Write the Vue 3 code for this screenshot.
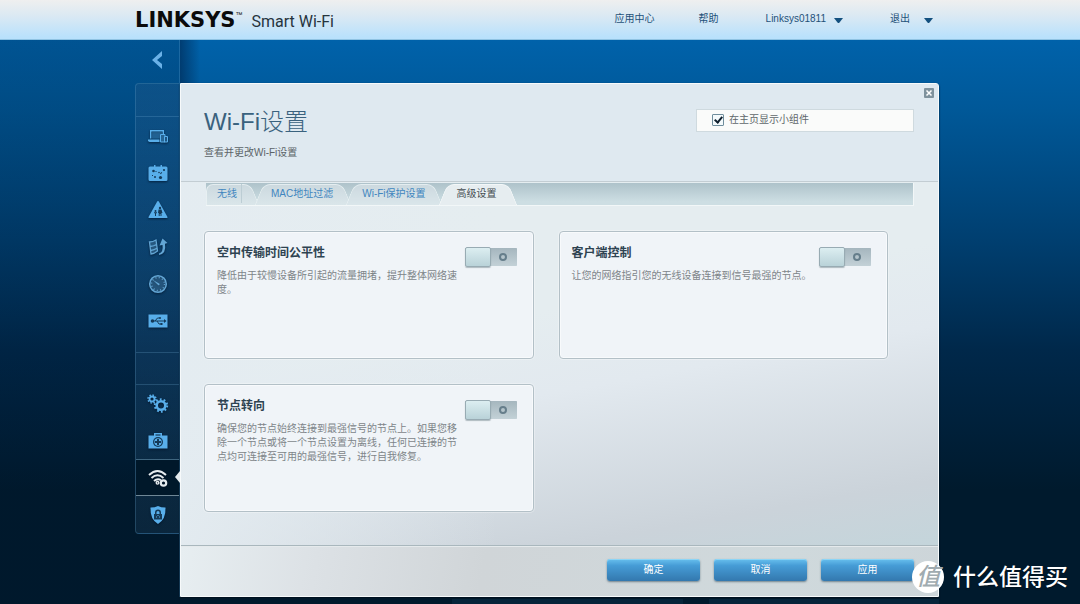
<script setup>
import { ref } from 'vue'

const tabs = ['无线', 'MAC地址过滤', 'Wi-Fi保护设置', '高级设置']
const activeTab = ref(3)
const showWidget = ref(true)

const cards = ref([
  {
    id: 'airtime',
    title: '空中传输时间公平性',
    text: '降低由于较慢设备所引起的流量拥堵，提升整体网络速度。',
    on: false
  },
  {
    id: 'client',
    title: '客户端控制',
    text: '让您的网络指引您的无线设备连接到信号最强的节点。',
    on: false
  },
  {
    id: 'node',
    title: '节点转向',
    text: '确保您的节点始终连接到最强信号的节点上。如果您移除一个节点或将一个节点设置为离线，任何已连接的节点均可连接至可用的最强信号，进行自我修复。',
    on: false
  }
])
</script>

<template>
  <div class="page">
    <header class="topbar">
      <a href="#" class="brand">
        <span class="brand-name">LINKSYS</span><span class="brand-tm">™</span>
        <span class="brand-sub">Smart Wi-Fi</span>
      </a>
      <nav class="topnav">
        <a href="#">应用中心</a>
        <a href="#">帮助</a>
        <button type="button">Linksys01811 <svg class="caret" viewBox="0 0 9 5"><path d="M0 0h9L5.500 4.500q-1 1-2 0z" /></svg></button>
        <button type="button">退出 <svg class="caret wide" viewBox="0 0 9 5"><path d="M0 0h9L5.500 4.500q-1 1-2 0z" /></svg></button>
      </nav>
    </header>

    <div class="workspace">
      <aside class="rail">
        <button type="button" class="back" aria-label="Back">
          <svg viewBox="0 0 12 18"><path d="M11 0v5L6 9l5 4v5L1 9z" /></svg>
        </button>
        <nav class="menu">
          <div class="blank"></div>
          <div class="group apps">
            <a href="#" aria-label="Devices">
              <svg viewBox="0 0 20 20">
                <path d="M2.700 12.500V4.700h12.600V8" fill="none" stroke="currentColor" stroke-width="1.400" />
                <path d="M4 6h10v2h-2v4.500H4z" opacity=".3" />
                <path d="M0 13.500h11.500V16H2q-1.500 0-2-1.500z" />
                <path d="M12.500 8.500h4.500v7.500h-4.500z" fill="currentColor" fill-opacity=".4" stroke="currentColor" />
                <path d="M16.500 10.500h3v5.500h-3z" fill="#1c5482" stroke="currentColor" />
              </svg>
            </a>
            <a href="#" aria-label="Guests">
              <svg viewBox="0 0 20 20">
                <path d="M2 3.500h4V2h1.500v1.500h5V2H14v1.500h4a1.500 1.500 0 0 1 1.500 1.500v11.500a1.500 1.500 0 0 1-1.500 1.500H2a1.500 1.500 0 0 1-1.500-1.500V5A1.500 1.500 0 0 1 2 3.500z" />
                <g class="ink"><circle cx="5.500" cy="8" r="1.300" /><circle cx="12.500" cy="14.500" r="1.600" /><circle cx="16" cy="7" r="1.100" /><circle cx="11" cy="9.500" r=".8" /><circle cx="7" cy="14" r="1" /><path d="M12 10.500l1.500-1.500.7.700-1.500 1.500zM4 12h1v1H4zM7.500 8h1v1h-1z" /></g>
              </svg>
            </a>
            <a href="#" aria-label="Parental controls">
              <svg viewBox="0 0 20 20">
                <path d="M10 1q.6 0 1 .7L19.500 17q.4 1-.7 1H1.200q-1.100 0-.7-1L9 1.700Q9.400 1 10 1z" />
                <g class="ink"><circle cx="12" cy="8" r="1.200" /><circle cx="7.500" cy="11" r="1" /><path d="M10.500 9.500h3l1 3.500h-1v3h-1v-2h-.8v2h-1v-3H10zM6 12.300h3v1H8V16H7v-2.700H6z" /></g>
              </svg>
            </a>
            <a href="#" aria-label="Prioritization">
              <svg class="soft" viewBox="0 0 20 20">
                <path d="M1.500 5q3.500 0 6.500-2l1.500 11q-3 2.500-6.500 3zM2.200 9.500Q6 9 8.800 7.200M2.800 13.500q3.500-.5 6.500-2.500" fill="currentColor" fill-opacity=".35" stroke="currentColor" stroke-width="1.300" />
                <path d="M11 16.500q4.500-1.500 3.500-8.500l-3 .5L14.500 1.500 19.500 6l-2.500.8q1.500 10-6 11.200z" />
              </svg>
            </a>
            <a href="#" aria-label="Speed test">
              <svg class="soft" viewBox="0 0 20 20">
                <circle cx="10" cy="10" r="8.300" fill="currentColor" fill-opacity=".3" stroke="currentColor" stroke-width="1.500" />
                <circle cx="10" cy="10" r="6.500" fill="none" stroke="currentColor" stroke-dasharray="1 2.400" stroke-width="1.500" />
                <path d="M5 6l6.500 3.700q.5 1.500-1.200 1.500z" />
              </svg>
            </a>
            <a href="#" aria-label="External storage">
              <svg viewBox="0 0 20 20">
                <path d="M.5 3.500h19v13H.5z" />
                <g class="ink"><path d="M3 9.500h13V8l2.500 2-2.500 2v-1.500H3z" /><circle cx="4.500" cy="10" r="1.800" /><path class="wire" d="M7 10l2.500-3h2M9 10l2 3h2" /><circle cx="12" cy="7" r="1" /><path d="M12.500 12h2v2h-2z" /></g>
              </svg>
            </a>
          </div>
          <div class="blank split"></div>
          <div class="group">
            <a href="#" aria-label="Connectivity">
              <svg class="gears" viewBox="0 0 22 20">
                <circle cx="5" cy="5" r="2.500" fill="none" stroke="currentColor" stroke-width="1.800" />
                <circle cx="5" cy="5" r="4" fill="none" stroke="currentColor" stroke-width="1.400" stroke-dasharray="1.570 1.570" />
                <circle cx="14" cy="11.500" r="4.300" fill="none" stroke="currentColor" stroke-width="2.600" />
                <circle cx="14" cy="11.500" r="6.200" fill="none" stroke="currentColor" stroke-width="2" stroke-dasharray="1.800 2.096" />
              </svg>
            </a>
            <a href="#" aria-label="Troubleshooting">
              <svg viewBox="0 0 20 20">
                <path d="M.5 4.500H6V2h8v2.500h5.500v13H.5zM7.500 3.500v1h5v-1z" />
                <circle class="ink" cx="10" cy="11" r="5" />
                <circle cx="10" cy="11" r="3.700" />
                <path class="ink" d="M9 8h2v2h2v2h-2v2H9v-2H7v-2h2z" />
              </svg>
            </a>
          </div>
          <a href="#" class="current" aria-label="Wi-Fi">
            <svg viewBox="0 0 20 20">
              <path d="M1 7q8.500-8 17 0M3.500 10q6-5.500 12 0M6 13q3.500-3.200 7-.8" fill="none" stroke="currentColor" stroke-width="1.900" />
              <circle cx="9.500" cy="14.800" r="1.300" fill="none" stroke="currentColor" stroke-width="1.400" />
              <circle cx="15.500" cy="15" r="2.700" fill="none" stroke="currentColor" stroke-width="2.200" />
            </svg>
            <span class="pointer"></span>
          </a>
          <a href="#" aria-label="Security">
            <svg viewBox="0 0 20 20">
              <path d="M10 1q3 1.500 7.500 1.500.5 12-7.500 16.500Q2 14.500 2.500 2.500 7 2.500 10 1z" />
              <path class="ink" d="M6 9h1V7.500q0-3 3-3t3 3V9h1v5.500H6zM8.500 9h3V7.500q0-1.500-1.500-1.500T8.500 7.500z" />
              <path d="M8 11.500h1v1H8zM11 11.500h1v1h-1zM9.500 10h1v1h-1z" />
            </svg>
          </a>
        </nav>
      </aside>

      <main class="panel">
        <div class="panel-head">
          <button type="button" class="close" aria-label="Close">
            <svg viewBox="0 0 10 10"><rect width="10" height="10" rx="1" /><path d="M2.500 2.500l5 5M7.500 2.500l-5 5" /></svg>
          </button>
          <div>
            <h1>Wi-Fi设置</h1>
            <p>查看并更改Wi-Fi设置</p>
          </div>
          <label class="widget" for="widget">
            <input id="widget" v-model="showWidget" type="checkbox">
            在主页显示小组件
          </label>
        </div>

        <div class="tabs" role="tablist">
          <button
            v-for="(tab, i) in tabs"
            :key="tab"
            type="button"
            role="tab"
            class="tab"
            :class="{ active: activeTab === i }"
            :aria-selected="activeTab === i"
            @click="activeTab = i"
          ><span>{{ tab }}</span></button>
        </div>

        <div class="cards">
          <section v-for="card in cards" :key="card.id" class="card">
            <div class="card-text">
              <h2><label :for="card.id">{{ card.title }}</label></h2>
              <p>{{ card.text }}</p>
            </div>
            <input :id="card.id" v-model="card.on" type="checkbox" role="switch" class="switch">
          </section>
        </div>

        <footer class="actions">
          <button type="button">确定</button>
          <button type="button">取消</button>
          <button type="button">应用</button>
        </footer>
      </main>
    </div>

    <div class="strip"><span></span><span></span></div>

    <div class="mark">
      <span class="mark-badge">值</span>
      <span>什么值得买</span>
    </div>
  </div>
</template>

<style>
body {
  margin: 0;
  background: #001a2d;
}
</style>

<style scoped>
*,
*::before,
*::after {
  box-sizing: border-box;
}

h1,
h2,
p {
  margin: 0;
}

.page {
  position: relative;
  display: flex;
  flex-direction: column;
  min-height: 100vh;
  background:
    linear-gradient(90deg, rgba(0, 18, 40, .18) 180px, transparent 180px),
    linear-gradient(#0062aa 40px, #005898 110px, #003f70 240px, #00284a 350px, #001a2d 490px);
  font-family: "Liberation Sans", "Noto Sans CJK SC", sans-serif;
  font-size: 10px;
  line-height: 14px;
}

button {
  font: inherit;
  border: 0;
  padding: 0;
  background: none;
  cursor: pointer;
}

a {
  color: inherit;
  text-decoration: none;
}

/* top bar */
.topbar {
  display: flex;
  justify-content: space-between;
  height: 40px;
  padding: 0 147px 0 135px;
  background: linear-gradient(#efefef, #dbe9f3 40%, #b9e1fc 95%);
  border-bottom: 1px solid #8fc3e3;
}

.brand {
  display: flex;
  align-items: baseline;
  padding-top: 9px;
  line-height: 22px;
  color: #0b0b0b;
}

.brand-name {
  font: bold 21px/22px "DejaVu Sans", sans-serif;
}

.brand-tm {
  align-self: flex-start;
  font-size: 7px;
  line-height: 12px;
}

.brand-sub {
  margin-left: 9px;
  font: 16px/22px Roboto, sans-serif;
  color: #26343d;
}

.topnav {
  display: flex;
  align-items: flex-start;
  padding-top: 12px;
  gap: 44px;
  color: #1f5179;
}

.topnav button {
  display: flex;
  align-items: center;
  gap: 8px;
  margin-left: 3px;
  color: inherit;
}

.caret {
  width: 9px;
  height: 5px;
  margin-top: 2px;
  fill: #14517f;
}

.caret.wide {
  margin-left: 6px;
}

/* frame */
.workspace {
  display: flex;
  flex: 1;
  margin: 0 141px 0 135px;
  background: linear-gradient(90deg, rgba(0, 25, 60, .5), transparent) no-repeat 45px 0 / 20px 43px;
}

.rail {
  flex: none;
  display: flex;
  flex-direction: column;
  width: 45px;
  border-right: 1px solid rgba(70, 140, 190, .4);
}

.back {
  height: 43px;
}

.back svg {
  width: 12px;
  height: 18px;
  fill: #6bb2e8;
}

.menu {
  border: 1px solid rgba(110, 170, 210, .25);
  border-right: 0;
  border-radius: 4px 0 0 4px;
  background: linear-gradient(rgba(25, 85, 135, .5), rgba(40, 80, 110, .25));
  color: #58aeea;
}

.blank {
  height: 33px;
  border-bottom: 1px solid rgba(110, 170, 210, .25);
}

.blank.split {
  border-top: 1px solid rgba(110, 170, 210, .25);
}

.group.apps {
  padding-bottom: 13px;
}

.menu a {
  position: relative;
  display: flex;
  align-items: center;
  justify-content: center;
  height: 37px;
}

.menu svg {
  width: 20px;
  height: 20px;
  fill: currentColor;
  filter: drop-shadow(0 1px 1px rgba(0, 15, 35, .7));
}

.menu svg.gears {
  width: 22px;
}

.menu svg.soft {
  color: #62a5d4;
}

.ink {
  fill: #153a58;
}

.wire {
  fill: none;
  stroke: #153a58;
}

.menu .current {
  background: #00182a;
  border-top: 1px solid #3f6680;
  border-bottom: 1px solid #6f8796;
  color: #e6ecef;
}

.pointer {
  position: absolute;
  right: -1px;
  top: 11px;
  border: solid transparent;
  border-width: 6px 5px 6px 0;
  border-right-color: #e5ebee;
}

/* panel */
.panel {
  flex: 1;
  min-width: 0;
  display: flex;
  flex-direction: column;
  margin-top: 43px;
  border: 1px solid #f7fafb;
  border-radius: 0 3px 0 0;
  background:
    linear-gradient(90deg, rgba(228, 236, 241, .9), rgba(228, 236, 241, 0) 42%),
    linear-gradient(170deg, #e5edf0 45%, #e2e9ef 58%, #cbd3da 82%, #c4d5db 92%);
  box-shadow: 0 1px 2px #00101d;
}

.panel-head {
  position: relative;
  display: flex;
  justify-content: space-between;
  align-items: flex-start;
  height: 98px;
  padding: 25px 24px 0 23px;
  background: #dfe9f0;
  border-bottom: 1px solid #c3cdd3;
}

h1 {
  font-size: 24px;
  font-weight: 300;
  line-height: 26px;
  color: #3a627e;
}

.panel-head p {
  margin-top: 11px;
  color: #5c6468;
}

.close {
  position: absolute;
  top: 4px;
  right: 4px;
  width: 10px;
  height: 10px;
  line-height: 0;
}

.close svg {
  width: 10px;
  height: 10px;
  fill: #7f929d;
  stroke: #fff;
  stroke-width: 1.5;
}

.close rect {
  stroke: none;
}

.widget {
  display: flex;
  align-items: center;
  gap: 5px;
  width: 218px;
  height: 23px;
  padding: 0 0 2px 15px;
  border: 1px solid #cfdadf;
  background: #fafbfa;
  color: #5f676b;
}

.widget input {
  appearance: none;
  position: relative;
  width: 12px;
  height: 12px;
  margin: 0;
  border: 1px solid #6f8d9c;
  border-radius: 1px;
  background: #f4fafc;
}

.widget input:checked::after {
  content: "";
  position: absolute;
  left: 3px;
  top: 0;
  width: 5px;
  height: 8px;
  border: solid #10202e;
  border-width: 0 2px 2px 0;
  transform: rotate(40deg);
}

/* tabs */
.tabs {
  display: flex;
  gap: 4px;
  height: 23px;
  margin: 1px 24px 0 25px;
  padding-top: 1px;
  background: linear-gradient(#aec2ca, #cddee3 85%);
  border: solid #f2f7f8;
  border-width: 0 1px 1px 0;
}

.tab {
  position: relative;
  padding: 0 13px 2px 12px;
  color: #3f86bf;
  isolation: isolate;
}

/* each half of a tab leans outwards; the halves meet behind the label */
.tab::before,
.tab::after {
  content: "";
  position: absolute;
  z-index: -1;
  top: 0;
  bottom: 0;
  background: linear-gradient(#ccd9df, #dae6ea);
  border-top: 1px solid #e4edf0;
}

.tab::before {
  left: 0;
  right: 35%;
  transform: skewX(-22deg);
  border-left: 1px solid #e8f0f2;
  border-radius: 7px 0 0 0;
}

.tab::after {
  left: 35%;
  right: 0;
  transform: skewX(22deg);
  border-right: 1px solid #e8f0f2;
  border-radius: 0 7px 0 0;
}

.tab:first-child {
  padding-left: 11px;
}

.tab:first-child::before {
  transform: none;
}

.tab:first-child span {
  padding: 4px 4px 4px 0;
  border-right: 1px solid #bccdd4;
}

.tab.active {
  padding-left: 14px;
  padding-right: 16px;
  color: #454d52;
}

.tab.active::before,
.tab.active::after {
  background: #e6edf0;
  border-color: #f3f7f8;
}

/* cards */
.cards {
  flex: 1;
  display: grid;
  grid-template-columns: 1fr 1fr;
  grid-auto-rows: 128px;
  gap: 25px;
  align-content: start;
  margin: 25px 50px 32px 23px;
}

.card {
  display: flex;
  align-items: flex-start;
  padding: 13px 16px 12px 12px;
  border: 1px solid #b3c0c7;
  border-radius: 4px;
  background: #f0f4f8;
  box-shadow: 0 0 0 1px rgba(255, 255, 255, .3), inset 0 0 0 1px #f8fafc;
}

.card-text {
  flex: 1;
  padding-right: 4px;
}

h2 {
  font-size: 12px;
  line-height: 16px;
  color: #2e4351;
}

.card p {
  margin-top: 8px;
  color: #7e8589;
}

.switch {
  appearance: none;
  flex: none;
  display: flex;
  align-items: center;
  justify-content: space-between;
  width: 52px;
  height: 20px;
  margin: 2px 0 0;
  padding-right: 10px;
  border-radius: 2px;
  background: linear-gradient(#a5b6be, #c3d1d7) no-repeat 0 1px / 100% 18px;
}

.switch::before {
  content: "";
  width: 26px;
  height: 20px;
  border: 1px solid #98abb3;
  border-radius: 2px;
  background: linear-gradient(#dceef1, #b9d2d8);
  box-shadow: 0 1px 1px rgba(80, 100, 110, .4);
}

.switch::after {
  content: "";
  width: 8px;
  height: 8px;
  border: 2px solid #667e8b;
  border-radius: 50%;
}

.switch:checked {
  flex-direction: row-reverse;
  padding: 0 0 0 10px;
}

/* footer */
.actions {
  display: flex;
  justify-content: flex-end;
  gap: 14px;
  height: 51px;
  padding: 13px 24px 0;
  border-top: 1px solid #a9b7bd;
  box-shadow: inset 0 1px #e5eaec;
  background: linear-gradient(100deg, #e7eef1, #dce1e5 18%, #d0d5d8 40%, #cfd9dc 80%, #cdd5d9);
}

.actions button {
  width: 93px;
  height: 22px;
  border-radius: 3px;
  background: linear-gradient(#68c0ee, #469cd6 30%, #3378ae);
  box-shadow: inset 0 1px #8cd5f6, 0 1px 2px rgba(50, 75, 90, .6);
  color: #fff;
}

.strip {
  display: flex;
  gap: 26px;
  height: 7px;
  padding: 2px 141px 0 452px;
}

.strip span {
  flex: 1;
  background: #06243a;
}

.mark {
  position: absolute;
  right: 12px;
  bottom: 11px;
  display: flex;
  align-items: center;
  gap: 9px;
  font: 500 23px/28px "Noto Sans CJK SC", sans-serif;
  color: #fff;
  text-shadow: 0 1px 2px rgba(0, 0, 0, .4);
}

.mark > span:last-child {
  padding-bottom: 4px;
}

.mark-badge {
  width: 32px;
  height: 32px;
  border-radius: 50%;
  background: #fff;
  color: #a0abb0;
  font-size: 24px;
  font-style: italic;
  line-height: 28px;
  text-align: center;
  text-shadow: none;
}
</style>
